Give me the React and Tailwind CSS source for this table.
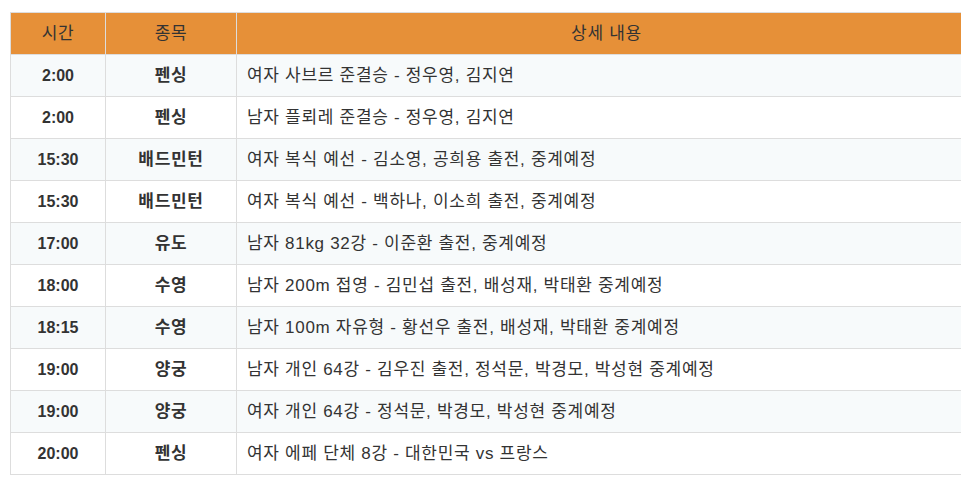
import React from 'react';

const rows = [
    ['2:00', '펜싱', '여자 사브르 준결승 - 정우영, 김지연'],
    ['2:00', '펜싱', '남자 플뢰레 준결승 - 정우영, 김지연'],
    ['15:30', '배드민턴', '여자 복식 예선 - 김소영, 공희용 출전, 중계예정'],
    ['15:30', '배드민턴', '여자 복식 예선 - 백하나, 이소희 출전, 중계예정'],
    ['17:00', '유도', '남자 81kg 32강 - 이준환 출전, 중계예정'],
    ['18:00', '수영', '남자 200m 접영 - 김민섭 출전, 배성재, 박태환 중계예정'],
    ['18:15', '수영', '남자 100m 자유형 - 황선우 출전, 배성재, 박태환 중계예정'],
    ['19:00', '양궁', '남자 개인 64강 - 김우진 출전, 정석문, 박경모, 박성현 중계예정'],
    ['19:00', '양궁', '여자 개인 64강 - 정석문, 박경모, 박성현 중계예정'],
    ['20:00', '펜싱', '여자 에페 단체 8강 - 대한민국 vs 프랑스'],
];

function App() {
    return (
        <div className="w-[961px] h-[478px] overflow-hidden bg-white pt-3 pl-[10px] font-['Liberation_Sans','Noto_Sans_CJK_KR',sans-serif] text-[17px] text-[#333]">
            <table className="w-[967px] border-collapse table-fixed">
                <colgroup>
                    <col className="w-[95px]" />
                    <col className="w-[131px]" />
                    <col />
                </colgroup>
                <thead>
                    <tr className="bg-[#e69038] h-[42px]">
                        <th className="border border-[#ddd] font-normal text-center tracking-[0.7px]">시간</th>
                        <th className="border border-[#ddd] font-normal text-center tracking-[0.7px]">종목</th>
                        <th className="border border-[#ddd] font-normal text-center tracking-[0.7px]">상세 내용</th>
                    </tr>
                </thead>
                <tbody>
                    {rows.map((r, i) => (
                        <tr key={i} className={i % 2 === 0 ? 'bg-[#f7fafb] h-[42px]' : 'bg-white h-[42px]'}>
                            <td className="border border-[#ddd] text-center font-bold text-[16px]">{r[0]}</td>
                            <td className="border border-[#ddd] text-center font-bold tracking-[0.7px]">{r[1]}</td>
                            <td className="border border-[#ddd] pl-[10px] tracking-[0.7px]">{r[2]}</td>
                        </tr>
                    ))}
                </tbody>
            </table>
        </div>
    );
}

export default App;
